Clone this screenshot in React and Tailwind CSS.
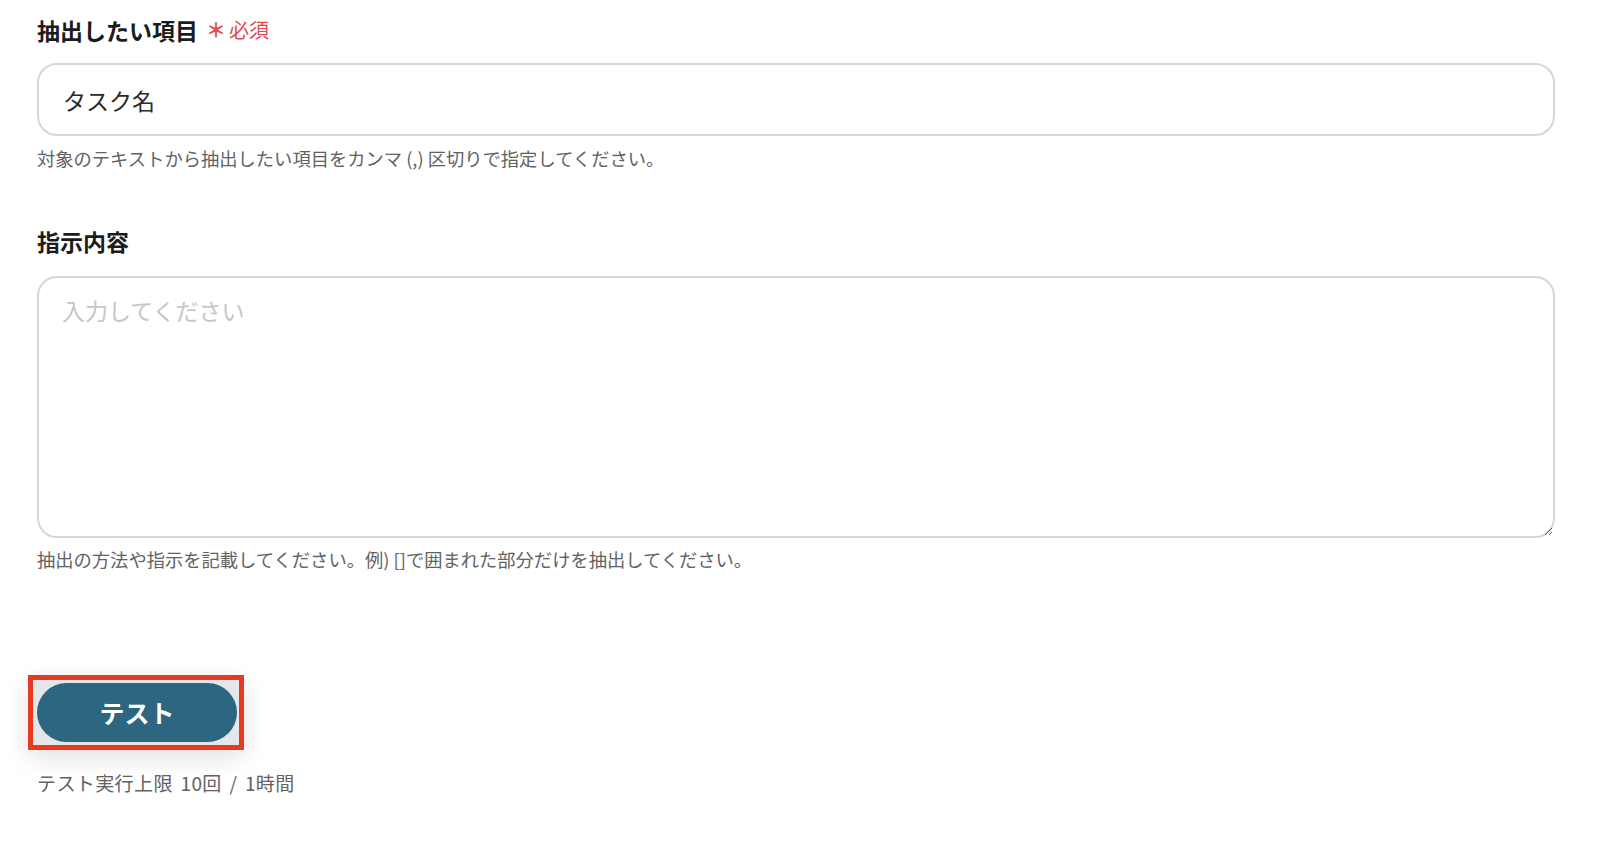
import { useState } from 'react';

const font = "font-['Noto_Sans_CJK_JP','Noto_Sans',sans-serif]";

function Label({ children, required }) {
  return (
    <div className="flex items-center h-[32px] text-[23px] leading-[32px] font-bold text-[#1c1c1c]">
      <span>{children}</span>
      {required && (
        <span className="ml-[8px] flex items-center text-[#e5484d] font-normal">
          <span className="text-[20px] font-bold">＊</span>
          <span className="text-[20px] ml-[3px]">必須</span>
        </span>
      )}
    </div>
  );
}

function Help({ children }) {
  return <p className="text-[18.3px] leading-[26px] text-[#626262]">{children}</p>;
}

export default function App() {
  const [value, setValue] = useState('タスク名');
  const [note, setNote] = useState('');

  return (
    <div className={`${font} min-h-screen bg-white pl-[37px] pr-[45px] pt-[14px]`}>
      <Label required>抽出したい項目</Label>
      <input
        value={value}
        onChange={(e) => setValue(e.target.value)}
        className="mt-[17px] block w-full h-[73px] rounded-[20px] border-2 border-[#d3d7dc] px-[24px] text-[23px] text-[#2a2a2a] outline-none"
      />
      <div className="mt-[9px]">
        <Help>対象のテキストから抽出したい項目をカンマ (,) 区切りで指定してください。</Help>
      </div>

      <div className="mt-[54px]">
        <Label>指示内容</Label>
      </div>
      <textarea
        value={note}
        onChange={(e) => setNote(e.target.value)}
        placeholder="入力してください"
        className="mt-[19px] block w-full h-[262px] rounded-[20px] border-2 border-[#d3d7dc] px-[23px] pt-[16px] text-[23px] leading-[32px] text-[#2a2a2a] placeholder:text-[#c6c6c6] outline-none"
      />
      <div className="mt-[8px]">
        <Help>抽出の方法や指示を記載してください。例) []で囲まれた部分だけを抽出してください。</Help>
      </div>

      <div className="mt-[103px] ml-[-9px] inline-flex border-[5px] border-[#e63b22] bg-[#e4e6e9] pl-[4px] pr-[2px] py-[3px] shadow-[0_8px_24px_rgba(0,0,0,0.12)]">
        <button className="w-[200px] h-[59px] rounded-full bg-[#2c6680] text-white text-[25px] font-bold">
          テスト
        </button>
      </div>

      <div className="mt-[20px]">
        <p className="text-[19px] leading-[26px] text-[#626262] [word-spacing:3px] tracking-[0.4px]">
          テスト実行上限 10回 / 1時間
        </p>
      </div>
    </div>
  );
}
